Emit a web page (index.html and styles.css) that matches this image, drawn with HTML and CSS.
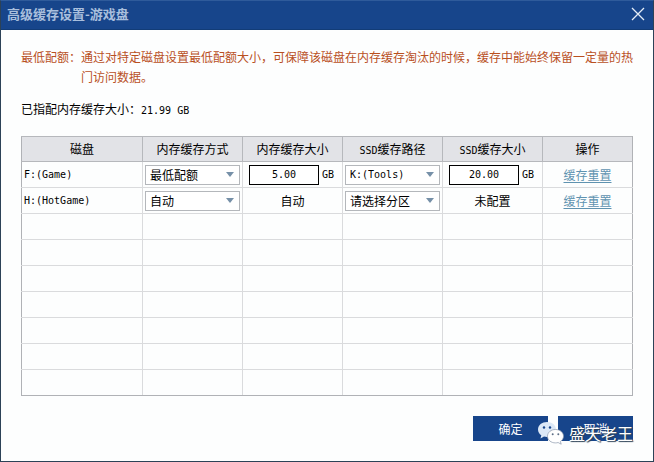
FILE: index.html
```html
<!DOCTYPE html>
<html lang="zh-CN">
<head>
  <meta charset="UTF-8">
  <title>高级缓存设置-游戏盘</title>
  <meta name="viewport" content="width=device-width, initial-scale=1.0">
  <link rel="stylesheet" href="styles.css">
</head>
<body>
<div class="dialog">
  <header class="titlebar">
    <h1 class="title">高级缓存设置-游戏盘</h1>
    <button class="close" type="button" aria-label="关闭">
      <svg width="14" height="14" viewBox="0 0 14 14"><path d="M1 1L13 13M13 1L1 13" stroke="#e4edf7" stroke-width="1.3" fill="none"/></svg>
    </button>
  </header>
  <form class="content">
    <div class="hint">
      <span class="hint-label">最低配额：</span>
      <p class="hint-text">通过对特定磁盘设置最低配额大小，可保障该磁盘在内存缓存淘汰的时候，缓存中能始终保留一定量的热门访问数据。</p>
    </div>
    <p class="total">已指配内存缓存大小：<span class="mono">21.99 GB</span></p>
    <table class="disks">
      <colgroup>
        <col><col class="col-mid"><col class="col-mid"><col class="col-mid"><col class="col-mid"><col class="col-action">
      </colgroup>
      <thead>
        <tr>
          <th>磁盘</th>
          <th>内存缓存方式</th>
          <th>内存缓存大小</th>
          <th><span class="mono">SSD</span>缓存路径</th>
          <th><span class="mono">SSD</span>缓存大小</th>
          <th>操作</th>
        </tr>
      </thead>
      <tbody>
        <tr>
          <td class="disk mono">F:(Game)</td>
          <td><select class="select" aria-label="F盘内存缓存方式"><option>最低配额</option><option>自动</option></select></td>
          <td><label class="size"><input class="size-input mono" type="text" value="5.00" aria-label="F盘内存缓存大小"><span class="mono">GB</span></label></td>
          <td><select class="select mono" aria-label="F盘SSD缓存路径"><option>K:(Tools)</option></select></td>
          <td><label class="size"><input class="size-input mono" type="text" value="20.00" aria-label="F盘SSD缓存大小"><span class="mono">GB</span></label></td>
          <td><a class="reset" href="#">缓存重置</a></td>
        </tr>
        <tr>
          <td class="disk mono">H:(HotGame)</td>
          <td><select class="select" aria-label="H盘内存缓存方式"><option>自动</option><option>最低配额</option></select></td>
          <td>自动</td>
          <td><select class="select" aria-label="H盘SSD缓存路径"><option>请选择分区</option></select></td>
          <td>未配置</td>
          <td><a class="reset" href="#">缓存重置</a></td>
        </tr>
        <tr><td></td><td></td><td></td><td></td><td></td><td></td></tr>
        <tr><td></td><td></td><td></td><td></td><td></td><td></td></tr>
        <tr><td></td><td></td><td></td><td></td><td></td><td></td></tr>
        <tr><td></td><td></td><td></td><td></td><td></td><td></td></tr>
        <tr><td></td><td></td><td></td><td></td><td></td><td></td></tr>
        <tr><td></td><td></td><td></td><td></td><td></td><td></td></tr>
        <tr><td></td><td></td><td></td><td></td><td></td><td></td></tr>
      </tbody>
    </table>
    <div class="actions">
      <button class="btn" type="submit">确定</button>
      <button class="btn" type="button">取消</button>
      <div class="watermark">
        <svg width="26" height="24" viewBox="0 0 26 24">
          <path d="M9 1C4 1 0 4 0 8.500C0 11 1.300 13 3.300 14.300L2.500 17.500L6 15.600C7 15.900 8 16 9 16C14 16 18 12.800 18 8.500C18 4 14 1 9 1Z" fill="#dce8f6"/>
          <circle cx="6" cy="6.500" r="1.200" fill="#17458b"/>
          <circle cx="12" cy="6.500" r="1.200" fill="#17458b"/>
          <path d="M17.500 8.500C13 8.500 9.500 11.400 9.500 15.200C9.500 19 13 21.900 17.500 21.900C18.400 21.900 19.300 21.800 20.100 21.500L23.200 23.200L22.400 20.500C24.300 19.200 25.500 17.300 25.500 15.200C25.500 11.400 22 8.500 17.500 8.500Z" fill="#fff" stroke="#8a97aa" stroke-width="0.700"/>
          <circle cx="14.700" cy="13.200" r="1" fill="#5f7087"/>
          <circle cx="20.300" cy="13.200" r="1" fill="#5f7087"/>
        </svg>
        <span>盛天老王</span>
      </div>
    </div>
  </form>
</div>
</body>
</html>
```

FILE: styles.css
```css
* {
  box-sizing: border-box;
}
body {
  margin: 0;
  background: #fdfefe;
  color: #000;
  font-family: "Noto Sans CJK SC", sans-serif;
  font-size: 12px;
  line-height: 20px;
}
.mono {
  font-family: "DejaVu Sans Mono", "Noto Sans CJK SC", monospace;
  font-size: 10px;
  line-height: 12px;
}
.dialog {
  min-height: 100vh;
  display: flex;
  flex-direction: column;
  border: 1px solid #2c4257;
  border-top-color: #2f5b9b;
}
.titlebar {
  display: flex;
  align-items: center;
  justify-content: space-between;
  height: 29px;
  padding: 0 8px 2px 6px;
  background: #17458b;
  border-bottom: 1px solid #123c77;
}
.title {
  margin: 0;
  font-size: 13px;
  font-weight: 700;
  color: #a9bfdd;
}
.close {
  display: flex;
  padding: 0;
  border: none;
  background: none;
  cursor: pointer;
}
.content {
  padding: 17px 20px 19px;
}
.hint {
  display: flex;
  margin-right: -4px;
  color: #b9501f;
}
.hint-label {
  flex: none;
}
.hint-text {
  margin: 0;
}
.total {
  margin: 12px 0 17px;
}
.disks {
  width: 100%;
  table-layout: fixed;
  border-collapse: collapse;
  border: 1px solid #b0b2b6;
}
.col-mid {
  width: 100px;
}
.col-action {
  width: 90px;
}
.disks th {
  height: 25px;
  padding: 0;
  background: #e2e3e7;
  border: 1px solid #b6b8bc;
  font-weight: normal;
}
.disks td {
  height: 26px;
  padding: 0 2px;
  border: 1px solid #dadbdd;
  text-align: center;
}
.disks tr > :first-child {
  border-left-color: #b0b2b6;
}
.disks tr > :last-child {
  border-right-color: #b0b2b6;
}
.disks tbody tr:last-child td {
  border-bottom-color: #b0b2b6;
}
.disks .disk {
  text-align: left;
}
.select {
  display: block;
  width: 100%;
  height: 20px;
  padding: 0 14px 0 4px;
  appearance: none;
  border: 1px solid #b4b7bb;
  border-radius: 0;
  color: #000;
  font-family: "Noto Sans CJK SC", sans-serif;
  font-size: 12px;
  line-height: 18px;
  background: #fff url("data:image/svg+xml,%3Csvg xmlns='http://www.w3.org/2000/svg' width='8' height='5'%3E%3Cpath d='M0 0h8L4 5z' fill='%237690a8'/%3E%3C/svg%3E") no-repeat right 5px center;
}
.select.mono {
  font-family: "DejaVu Sans Mono", "Noto Sans CJK SC", monospace;
  font-size: 10px;
}
.size {
  display: flex;
  align-items: center;
  gap: 3px;
  padding-left: 4px;
}
.size-input {
  width: 70px;
  min-width: 0;
  height: 20px;
  padding: 0;
  border: 1px solid #000;
  background: #fff;
  color: #000;
  text-align: center;
}
.reset {
  color: #5f93b0;
  text-underline-offset: 2px;
}
.actions {
  position: relative;
  display: flex;
  justify-content: flex-end;
  gap: 10px;
  margin-top: 20px;
}
.btn {
  width: 75px;
  height: 25px;
  padding: 0;
  border: none;
  background: #17458b;
  color: #fff;
  font-family: inherit;
  font-size: 12px;
  cursor: pointer;
}
/* account mark floating over the buttons */
.watermark {
  position: absolute;
  top: 5px;
  right: 0;
  display: flex;
  align-items: center;
  gap: 5px;
  color: #fff;
  font-size: 16px;
  text-shadow: 0 0 1px #2c4257, 1px 1px 1px #2c4257;
  pointer-events: none;
}
```
